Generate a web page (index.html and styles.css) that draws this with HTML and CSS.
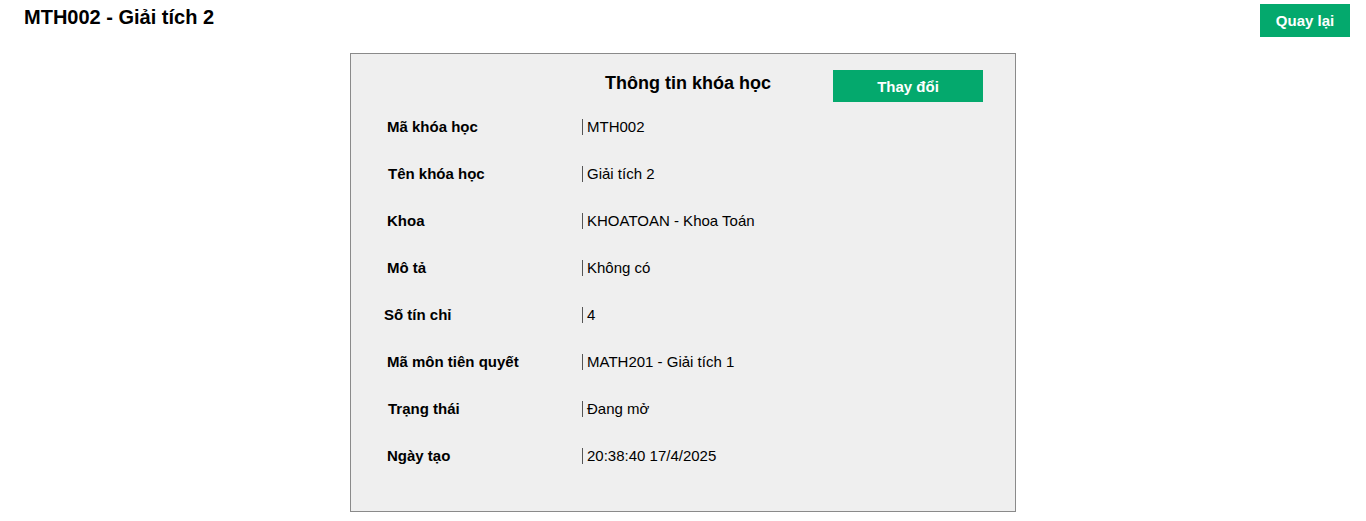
FILE: index.html
```html
<!DOCTYPE html>
<html lang="vi">
<head>
<meta charset="utf-8">
<title>MTH002 - Giải tích 2</title>
<link rel="stylesheet" href="styles.css">
</head>
<body>
<header class="top">
  <h1 class="page-title">MTH002 - Giải tích 2</h1>
  <button class="btn btn-back">Quay lại</button>
</header>
<main class="card">
  <div class="card-head">
    <span></span>
    <h2 class="card-title">Thông tin khóa học</h2>
    <button class="btn btn-edit">Thay đổi</button>
  </div>
  <div class="rows">
    <div class="row"><span class="label">Mã khóa học</span><span class="value">MTH002</span></div>
    <div class="row"><span class="label shift-r">Tên khóa học</span><span class="value">Giải tích 2</span></div>
    <div class="row"><span class="label">Khoa</span><span class="value">KHOATOAN - Khoa Toán</span></div>
    <div class="row"><span class="label">Mô tả</span><span class="value">Không có</span></div>
    <div class="row"><span class="label shift-l">Số tín chỉ</span><span class="value">4</span></div>
    <div class="row"><span class="label">Mã môn tiên quyết</span><span class="value">MATH201 - Giải tích 1</span></div>
    <div class="row"><span class="label shift-r">Trạng thái</span><span class="value">Đang mở</span></div>
    <div class="row"><span class="label">Ngày tạo</span><span class="value">20:38:40 17/4/2025</span></div>
  </div>
</main>
</body>
</html>
```
FILE: styles.css
```css
* { box-sizing: border-box; }
body {
  margin: 0;
  font-family: "Liberation Sans", Arial, sans-serif;
  color: #000;
  background: #fff;
}
.top {
  display: flex;
  justify-content: space-between;
  align-items: flex-start;
  padding: 4px 16px 0 24px;
  height: 53px;
}
.page-title {
  margin: 2px 0 0;
  font-size: 20px;
  font-weight: bold;
  line-height: 23px;
}
.btn {
  border: none;
  background: #04a96d;
  color: #fff;
  font-family: "Liberation Sans", Arial, sans-serif;
  font-weight: bold;
  cursor: pointer;
  padding: 0;
}
.btn-back {
  width: 90px;
  height: 33px;
  font-size: 15px;
}
.card {
  width: 666px;
  margin: 0 auto;
  background: #efefef;
  border: 1px solid #8a8a8a;
  padding: 16px 32px 32px 0;
}
.card-head {
  display: grid;
  grid-template-columns: 1fr auto 1fr;
  align-items: start;
  padding-left: 42px;
}
.card-title {
  margin: 1px 0 0;
  font-size: 18px;
  line-height: 24px;
  font-weight: bold;
  grid-column: 2;
}
.btn-edit {
  grid-column: 3;
  justify-self: end;
  width: 150px;
  height: 32px;
  font-size: 15px;
}
.rows {
  padding-top: 1px;
  padding-left: 36px;
}
.row {
  display: grid;
  grid-template-columns: 195px 1fr;
  align-items: center;
  height: 47px;
}
.label {
  font-size: 15px;
  font-weight: bold;
}
.shift-r { padding-left: 1px; }
.shift-l { margin-left: -3px; }
.value {
  font-size: 15px;
  line-height: 16px;
  border-left: 1px solid #555;
  padding-left: 4px;
}
```
